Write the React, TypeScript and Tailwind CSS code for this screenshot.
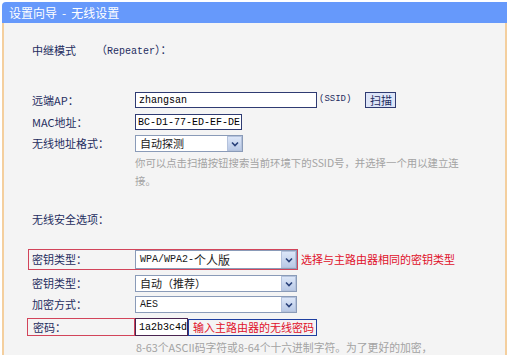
import type { ReactNode } from "react";

const cjk = "font-['Noto_Sans_CJK_SC',sans-serif]";
const mono = "font-['Liberation_Mono','Noto_Sans_CJK_SC',monospace]";

function Label({ children }: { children: ReactNode }) {
  return <span className="block text-[11px] leading-[15px] text-[#1f2d5f]">{children}</span>;
}

function Chevron() {
  return (
    <span className="flex h-full w-[15px] items-center justify-center border border-[#b4c2dc] bg-gradient-to-b from-[#dce6f8] to-[#b9c9e6]">
      <svg width="8" height="6" viewBox="0 0 8 6">
        <polyline points="1,1.5 4,4.5 7,1.5" fill="none" stroke="#29417a" strokeWidth="1.6" />
      </svg>
    </span>
  );
}

function Select({ children, className }: { children: ReactNode; className?: string }) {
  return (
    <div className={`flex items-stretch border border-[#8a9bb8] bg-white ${className ?? ""}`}>
      <span className="flex flex-1 items-center pl-[4px] text-[11px] text-[#1a1a1a]">{children}</span>
      <Chevron />
    </div>
  );
}

function Row({ className, children }: { className: string; children: ReactNode }) {
  return <div className={`flex items-center ${className}`}>{children}</div>;
}

export default function App() {
  return (
    <div className={`h-[355px] w-[510px] overflow-hidden bg-white pl-[2px] pt-[2px] ${cjk}`}>
      <div className="w-[505px]">
        <div className="flex h-[21px] items-center rounded-tl-[4px] bg-[#6699fb] pl-[7px] text-[12px] text-white">
          <span>设置向导</span>
          <span className="px-[5px]">-</span>
          <span>无线设置</span>
        </div>

        <div className="flex h-[340px] flex-col border-l-2 border-r-2 border-[#f4cf9e] bg-[#f4f4f4]">
          <Row className="mt-[19px] h-[16px] pl-[28px]">
            <Label>中继模式</Label>
            <span className="ml-[20px] text-[11px] leading-[15px] text-[#1f2d5f]">
              （<span className={`${mono} text-[10px]`}>Repeater</span>）：
            </span>
          </Row>

          <Row className="mt-[34px] h-[16px]">
            <div className="w-[131px] pl-[28px]">
              <Label>远端AP：</Label>
            </div>
            <div className={`flex h-[16px] w-[182px] items-center border border-[#2f3b72] bg-white pl-[3px] text-[10px] text-black ${mono}`}>
              zhangsan
            </div>
            <span className={`ml-[2px] text-[9px] text-[#1f2d5f] ${mono}`}>(SSID)</span>
            <button
              type="button"
              className="ml-[14px] flex h-[16px] w-[31px] items-center justify-center border border-[#2f3b72] bg-[#dde5f8] text-[11px] leading-none text-[#1f2d5f]"
            >
              扫描
            </button>
          </Row>

          <Row className="mt-[6px] h-[16px]">
            <div className="w-[131px] pl-[28px]">
              <Label>MAC地址：</Label>
            </div>
            <div className={`flex h-[16px] w-[107px] items-center border border-[#2f3b72] bg-white pl-[2px] text-[10px] text-black ${mono}`}>
              BC-D1-77-ED-EF-DE
            </div>
          </Row>

          <Row className="mt-[5px] h-[17px]">
            <div className="w-[131px] pl-[28px]">
              <Label>无线地址格式：</Label>
            </div>
            <Select className="h-[17px] w-[108px]">自动探测</Select>
          </Row>

          <div className="mt-[2px] pl-[131px] text-[10.4px] leading-[18px] whitespace-nowrap text-[#a3a3a3]">
            <div>你可以点击扫描按钮搜索当前环境下的SSID号，并选择一个用以建立连</div>
            <div>接。</div>
          </div>

          <Row className="mt-[21px] h-[16px] pl-[28px]">
            <Label>无线安全选项：</Label>
          </Row>

          <Row className="mt-[22px] h-[21px]">
            <div className="ml-[24px] flex h-[21px] w-[270px] items-center border border-[#d2445a]">
              <div className="w-[106px] pl-[3px]">
                <Label>密钥类型：</Label>
              </div>
              <Select className="h-[19px] flex-1">
                <span className={`${mono} text-[10px]`}>WPA/WPA2-</span>
                <span className="text-[12px]">个人版</span>
              </Select>
            </div>
            <span className="ml-[3px] text-[11px] leading-[15px] text-[#e0102a]">选择与主路由器相同的密钥类型</span>
          </Row>

          <Row className="mt-[5px] h-[17px]">
            <div className="w-[131px] pl-[28px]">
              <Label>密钥类型：</Label>
            </div>
            <Select className="h-[17px] w-[162px]">自动（推荐）</Select>
          </Row>

          <Row className="mt-[4px] h-[17px]">
            <div className="w-[131px] pl-[28px]">
              <Label>加密方式：</Label>
            </div>
            <Select className="h-[17px] w-[162px]">
              <span className={`${mono} text-[10px]`}>AES</span>
            </Select>
          </Row>

          <Row className="mt-[5px] h-[18px]">
            <div className="ml-[23px] flex h-[18px] w-[108px] items-center border border-[#d2445a] pl-[5px]">
              <Label>密码：</Label>
            </div>
            <div className={`flex h-[18px] w-[53px] items-center border border-[#4a2450] bg-white pl-[3px] text-[10px] text-black ${mono}`}>
              1a2b3c4d
            </div>
            <div className="flex h-[17px] w-[129px] items-center border border-[#1f3fa0] pl-[4px] text-[11px] leading-[15px] text-[#e0102a]">
              输入主路由器的无线密码
            </div>
          </Row>

          <div className="mt-[3px] h-[16px] pl-[132px] text-[10.8px] leading-[16px] whitespace-nowrap text-[#a3a3a3]">
            8-63个ASCII码字符或8-64个十六进制字符。为了更好的加密，
          </div>
        </div>
      </div>
    </div>
  );
}
